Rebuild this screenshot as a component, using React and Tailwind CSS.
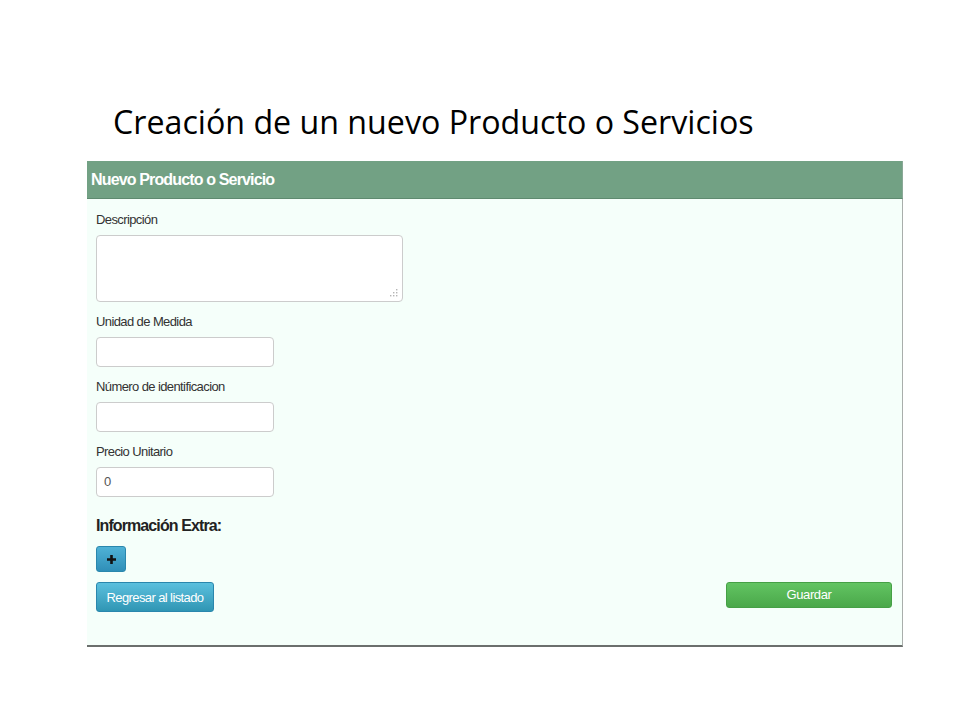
import React from "react";

export default function App() {
  const arial = { fontFamily: '"Liberation Sans", Arial, sans-serif' };
  return (
    <div className="w-[960px] h-[720px] bg-white relative overflow-hidden">
      <div className="pt-[98px] pl-[113px]">
        <h1
          className="text-[32.2px] leading-[48px] text-black"
          style={{ fontFamily: '"Open Sans", Calibri, sans-serif' }}
        >
          Creación de un nuevo Producto o Servicios
        </h1>
      </div>
      <div className="mt-[15px] ml-[87px] w-[816px]" style={arial}>
        <div className="h-[38px] bg-[#72a184] border-b border-[#5f8a70] border-r border-r-[#8aa897] flex items-center pl-[4px]">
          <span className="text-white font-bold text-[16px] tracking-[-0.85px]">
            Nuevo Producto o Servicio
          </span>
        </div>
        <div className="bg-[#f5fffa] border-r border-[#a9aeab] border-b-2 border-b-[#6b6f6d] h-[448px] pl-[9px] pr-[10px] pt-[12px] flex flex-col">
          <label className="text-[13px] text-[#333] leading-[18px] tracking-[-0.6px]">Descripción</label>
          <div className="mt-[6px] w-[307px] h-[67px] bg-white border border-[#ccc] rounded-[4px] relative">
            <svg className="absolute right-[4px] bottom-[4px]" width="9" height="9" viewBox="0 0 9 9">
              <g fill="#b5b5b5">
                <rect x="7" y="1" width="1.4" height="1.4" />
                <rect x="4" y="4" width="1.4" height="1.4" />
                <rect x="7" y="4" width="1.4" height="1.4" />
                <rect x="1" y="7" width="1.4" height="1.4" />
                <rect x="4" y="7" width="1.4" height="1.4" />
                <rect x="7" y="7" width="1.4" height="1.4" />
              </g>
            </svg>
          </div>
          <label className="mt-[11px] text-[13px] text-[#333] leading-[18px] tracking-[-0.6px]">Unidad de Medida</label>
          <div className="mt-[6px] w-[178px] h-[30px] bg-white border border-[#ccc] rounded-[4px]" />
          <label className="mt-[11px] text-[13px] text-[#333] leading-[18px] tracking-[-0.6px]">Número de identificacion</label>
          <div className="mt-[6px] w-[178px] h-[30px] bg-white border border-[#ccc] rounded-[4px]" />
          <label className="mt-[11px] text-[13px] text-[#333] leading-[18px] tracking-[-0.6px]">Precio Unitario</label>
          <div className="mt-[6px] w-[178px] h-[30px] bg-white border border-[#ccc] rounded-[4px] flex items-center pl-[7px] text-[13px] text-[#555]">
            0
          </div>
          <div className="mt-[18px] text-[16px] font-bold text-[#222] leading-[22px] tracking-[-0.9px]">
            Información Extra:
          </div>
          <div className="mt-[9px] w-[30px] h-[26px] rounded-[3px] bg-gradient-to-b from-[#4fb2d6] to-[#2f8fb8] border border-[#2a87ad] flex items-center justify-center">
            <svg width="11" height="11" viewBox="0 0 11 11">
              <path d="M5.5 1v9M1 5.5h9" stroke="#111" strokeWidth="2.6" />
            </svg>
          </div>
          <div className="mt-[10px] flex items-start justify-between">
            <div className="w-[118px] h-[30px] rounded-[3px] bg-gradient-to-b from-[#5bc0de] to-[#2f96b4] border border-[#2a87ad] flex items-center justify-center text-white text-[13px] tracking-[-0.6px] pt-[1px]">
              Regresar al listado
            </div>
            <div className="w-[166px] h-[26px] rounded-[3px] bg-gradient-to-b from-[#62c462] to-[#4aa84a] border border-[#45a045] flex items-center justify-center text-white text-[13px] tracking-[-0.4px]">
              Guardar
            </div>
          </div>
        </div>
      </div>
    </div>
  );
}
